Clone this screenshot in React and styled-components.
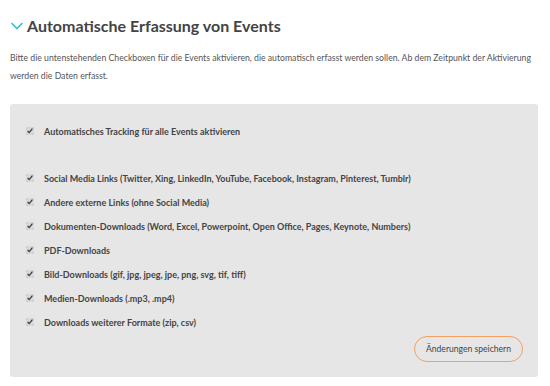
import React from 'react';
import styled, { createGlobalStyle } from 'styled-components';

const Global = createGlobalStyle`
  body {
    margin: 0;
    background: #fff;
    font-family: Lato, "Open Sans", sans-serif;
  }
`

const Page = styled.div`
  width: 550px;
  height: 386px;
  padding: 0 12px 0 10px;
  box-sizing: border-box;
  overflow: hidden;
`

const Title = styled.h1`
  display: flex;
  align-items: center;
  gap: 3px;
  margin: 0;
  padding-top: 15px;
  font-size: 16px;
  font-weight: 700;
  color: #444;
  line-height: 22px;
`

const Para = styled.p`
  margin: 12px 0 0;
  font-size: 8.7px;
  line-height: 18px;
  color: #555;
`

const Panel = styled.div`
  margin-top: 19px;
  background: #e6e6e6;
  border-radius: 3px;
  padding: 15px 15px 15px 16px;
  display: flex;
  flex-direction: column;
`

const Row = styled.label`
  display: flex;
  align-items: center;
  gap: 10px;
  height: 24px;
  margin-bottom: ${p => (p.$gap ? '23px' : '0')};
  font-size: 9px;
  font-weight: 700;
  color: #444;
`

const Box = styled.input`
  width: 8px;
  height: 8px;
  margin: 0;
  accent-color: #d8d8d8;
`

const Footer = styled.div`
  display: flex;
  justify-content: flex-end;
  margin-top: 2px;
`

const SaveButton = styled.button`
  font-family: Lato, "Open Sans", sans-serif;
  font-size: 8.6px;
  white-space: nowrap;
  color: #444;
  background: transparent;
  border: 1.5px solid #f3a060;
  border-radius: 13px;
  height: 26px;
  width: 109px;
  padding: 0;
  cursor: pointer;
`

const Chevron = () => (
  <svg width="14" height="10" viewBox="0 0 14 10">
    <path d="M1.5 2 L7 7.5 L12.5 2" fill="none" stroke="#2cc3d6" strokeWidth="1.6" />
  </svg>
)

const items = [
  'Automatisches Tracking für alle Events aktivieren',
  'Social Media Links (Twitter, Xing, LinkedIn, YouTube, Facebook, Instagram, Pinterest, Tumblr)',
  'Andere externe Links (ohne Social Media)',
  'Dokumenten-Downloads (Word, Excel, Powerpoint, Open Office, Pages, Keynote, Numbers)',
  'PDF-Downloads',
  'Bild-Downloads (gif, jpg, jpeg, jpe, png, svg, tif, tiff)',
  'Medien-Downloads (.mp3, .mp4)',
  'Downloads weiterer Formate (zip, csv)',
]

export default function App() {
  return (
    <Page>
      <Global />
      <Title>
        <Chevron />
        Automatische Erfassung von Events
      </Title>
      <Para>
        Bitte die untenstehenden Checkboxen für die Events aktivieren, die automatisch erfasst werden sollen. Ab dem Zeitpunkt der Aktivierung werden die Daten erfasst.
      </Para>
      <Panel>
        {items.map((t, i) => (
          <Row key={t} $gap={i === 0}>
            <Box type="checkbox" defaultChecked />
            {t}
          </Row>
        ))}
        <Footer>
          <SaveButton>Änderungen speichern</SaveButton>
        </Footer>
      </Panel>
    </Page>
  );
}
